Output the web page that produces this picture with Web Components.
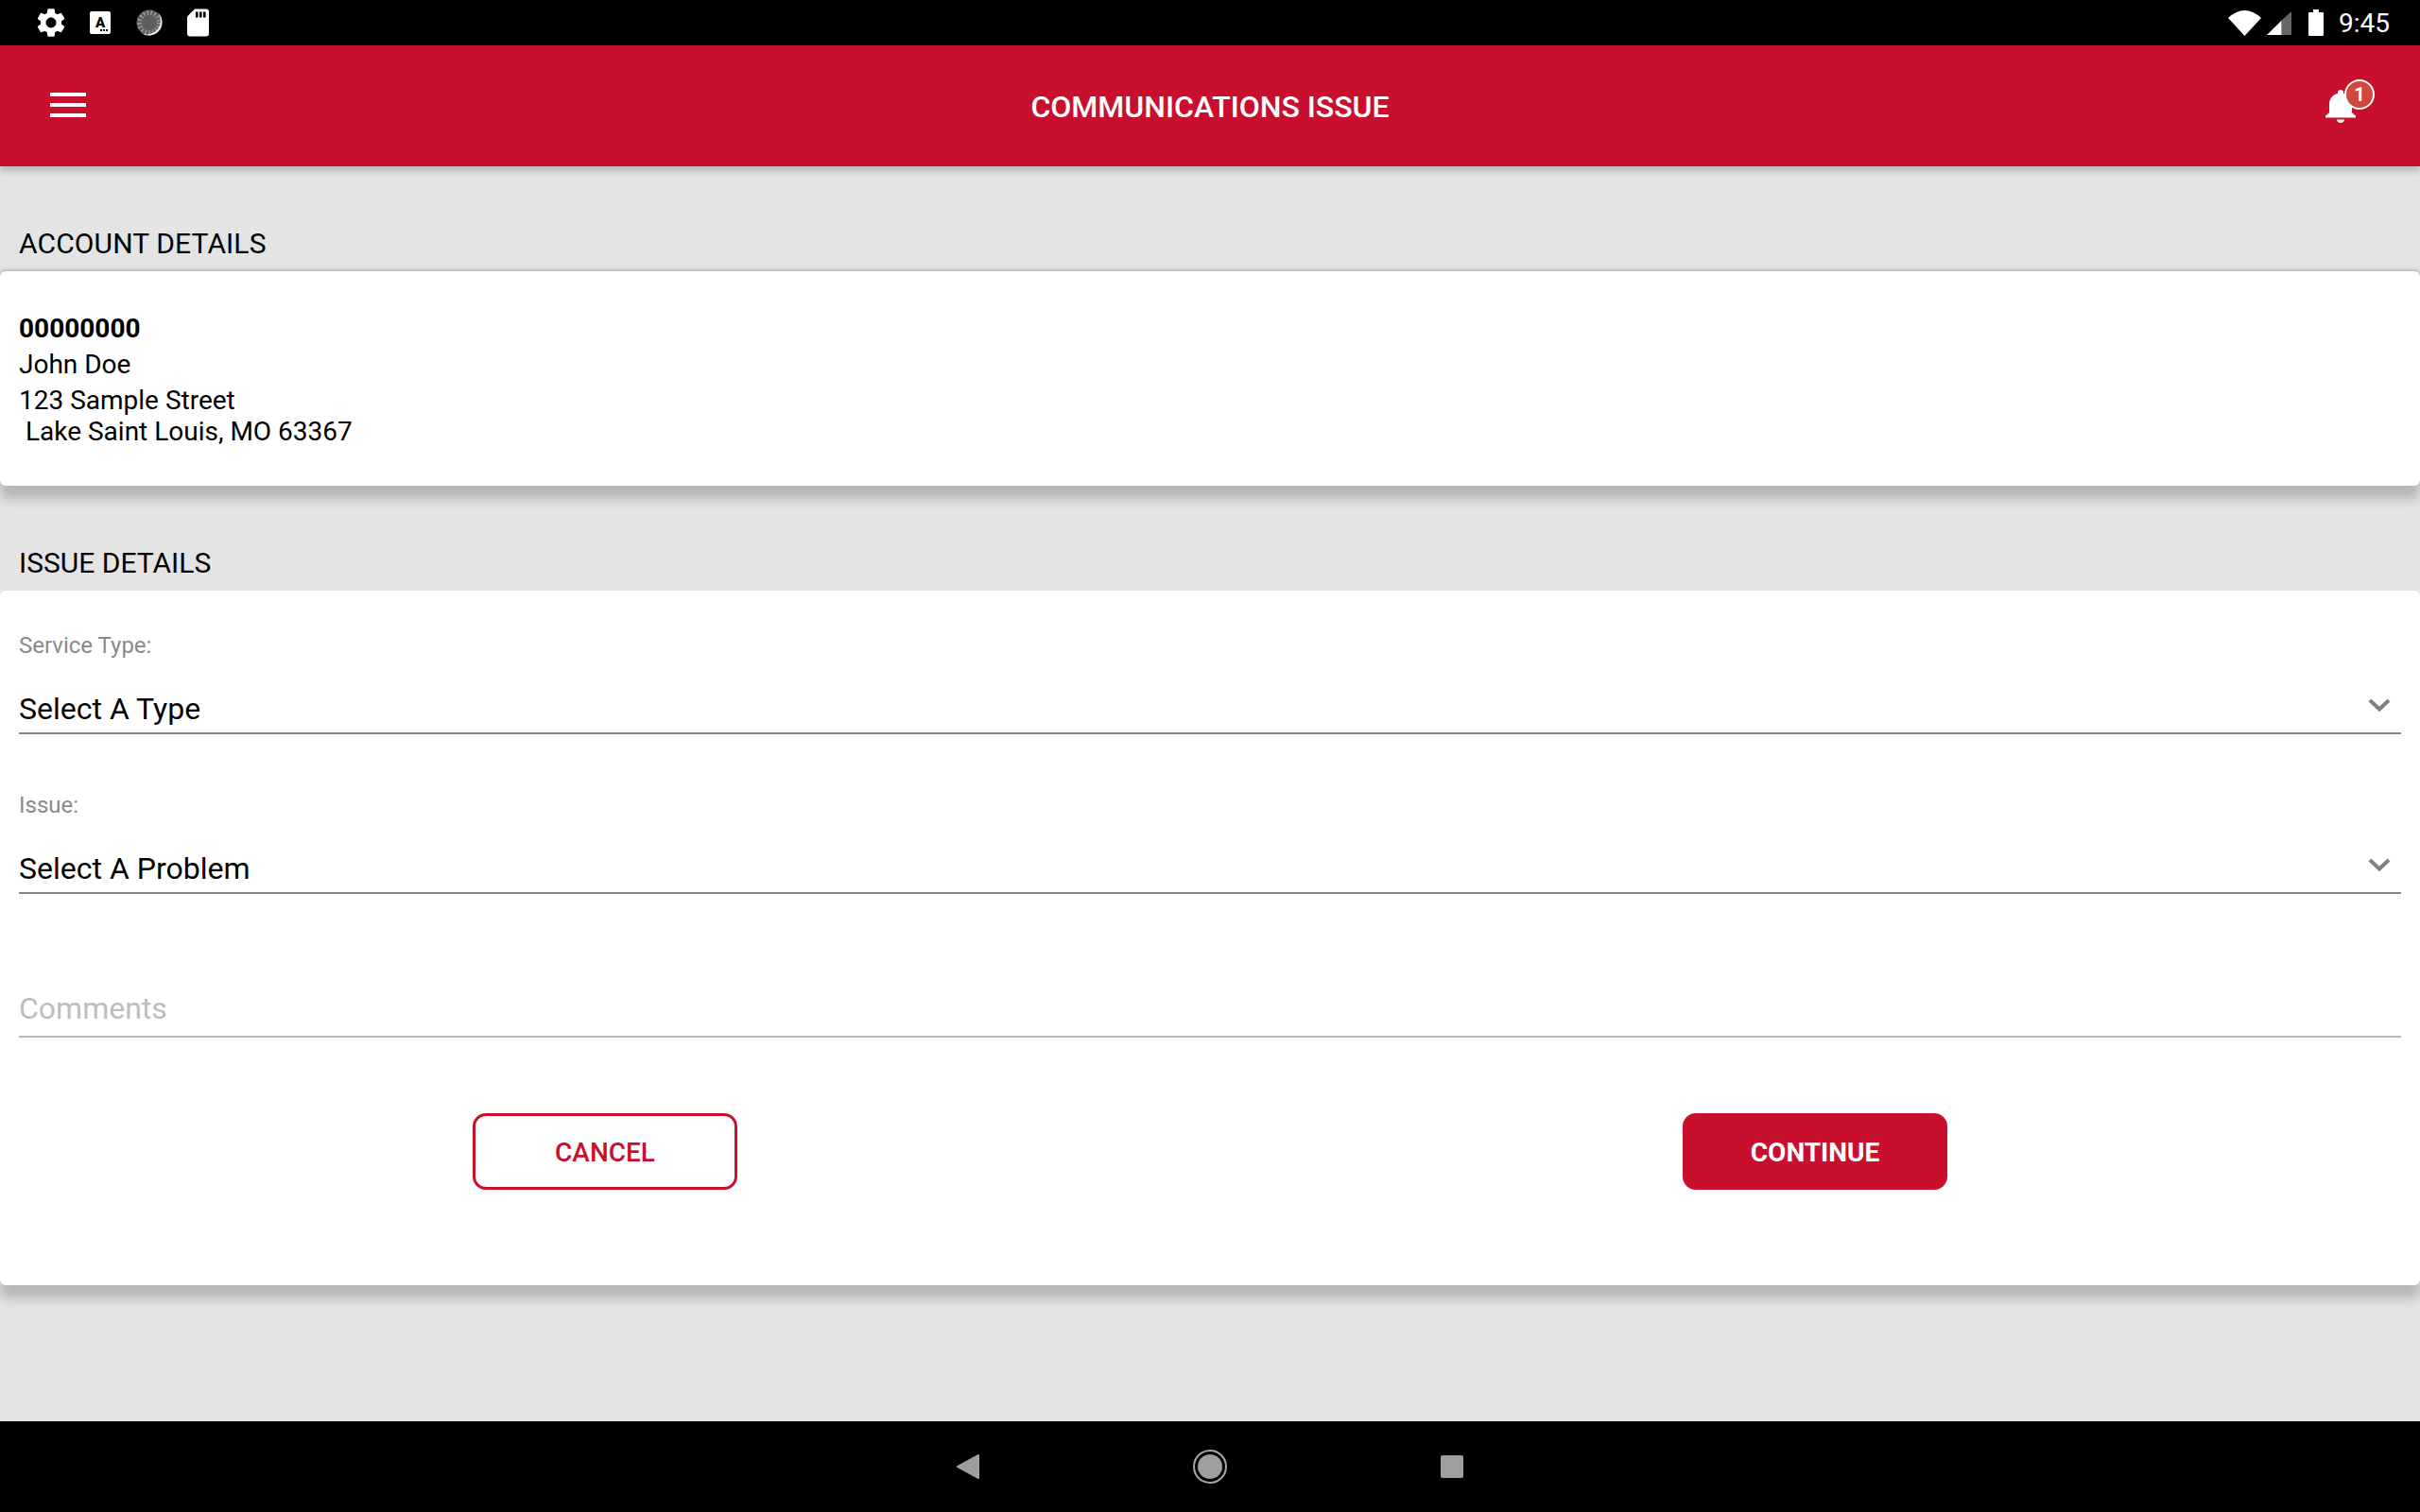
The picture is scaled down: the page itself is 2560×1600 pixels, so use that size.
<!DOCTYPE html>
<html>
<head>
<meta charset="utf-8">
<title>Communications Issue</title>
<style>
  html, body { margin: 0; height: 100%; }
  body {
    width: 2560px;
    height: 1600px;
    overflow: hidden;
    display: flex;
    flex-direction: column;
    background: #e4e4e4;
    color: #000;
    font-family: Roboto, "Liberation Sans", sans-serif;
  }
  main { flex: 1; display: block; }
</style>
</head>
<body>
  <status-bar></status-bar>
  <app-bar>COMMUNICATIONS ISSUE</app-bar>
  <main>
    <section-label style="margin-top:64px;letter-spacing:.12px">ACCOUNT DETAILS</section-label>
    <info-card pad="44px 20px 41px" shade>
      <account-info number="00000000" name="John Doe" street="123 Sample Street" city=" Lake Saint Louis, MO 63367"></account-info>
    </info-card>
    <section-label style="margin-top:64px">ISSUE DETAILS</section-label>
    <info-card pad="44px 20px 101px">
      <select-field label="Service Type:" value="Select A Type"></select-field>
      <select-field label="Issue:" value="Select A Problem" style="margin-top:61px"></select-field>
      <comment-field placeholder="Comments"></comment-field>
      <form-actions>
        <action-button outline>CANCEL</action-button>
        <action-button>CONTINUE</action-button>
      </form-actions>
    </info-card>
  </main>
  <nav-bar></nav-bar>

<script>
class StatusBar extends HTMLElement {
  connectedCallback() {
    const shadow = this.attachShadow({ mode: "open" });
    shadow.innerHTML = `
      <style>
        :host {
          display: flex;
          justify-content: space-between;
          align-items: center;
          height: 48px;
          background: #000;
          color: #fff;
          flex: none;
        }
        .left { display: flex; align-items: center; gap: 20px; margin-left: 38px; }
        .left svg { width: 32px; height: 32px; display: block; }
        .right { display: flex; align-items: center; margin-right: 32px; }
        .time {
          font: 400 28px/33px Roboto, sans-serif;
          margin-left: 16px;
          color: #fff;
        }
        svg { display: block; flex: none; }
      </style>
      <div class="left">
        <svg viewBox="1.5 1.5 21 21"><path fill="#fff" d="M19.14 12.94c.04-.3.06-.61.06-.94 0-.32-.02-.64-.07-.94l2.03-1.58c.18-.14.23-.41.12-.61l-1.92-3.32c-.12-.22-.37-.29-.59-.22l-2.39.96c-.5-.38-1.03-.7-1.62-.94l-.36-2.54c-.04-.24-.24-.41-.48-.41h-3.84c-.24 0-.43.17-.47.41l-.36 2.54c-.59.24-1.13.57-1.62.94l-2.39-.96c-.22-.08-.47 0-.59.22L2.74 8.87c-.12.21-.08.47.12.61l2.03 1.58c-.05.3-.09.63-.09.94s.02.64.07.94l-2.03 1.58c-.18.14-.23.41-.12.61l1.92 3.32c.12.22.37.29.59.22l2.39-.96c.5.38 1.03.7 1.62.94l.36 2.54c.05.24.24.41.48.41h3.84c.24 0 .44-.17.47-.41l.36-2.54c.59-.24 1.13-.56 1.62-.94l2.39.96c.22.08.47 0 .59-.22l1.92-3.32c.12-.22.07-.47-.12-.61l-2.01-1.58zM12 15.6c-1.98 0-3.6-1.62-3.6-3.6s1.62-3.6 3.6-3.6 3.6 1.62 3.6 3.6-1.62 3.6-3.6 3.6z"/></svg>
        <svg viewBox="0 0 32 32">
          <rect x="5" y="4" width="22" height="24" rx="2" fill="#fff"/>
          <text x="16" y="21" text-anchor="middle" font-family="Roboto, sans-serif" font-weight="900" font-size="15" fill="#000">A</text>
          <rect x="16" y="23" width="2" height="2" fill="#000"/><rect x="19" y="23" width="2" height="2" fill="#000"/><rect x="22" y="23" width="2" height="2" fill="#000"/>
        </svg>
        <svg viewBox="0 0 32 32">
          <circle cx="16" cy="16" r="13.5" fill="#5e5e5e"/>
          <circle cx="16" cy="16" r="10.5" fill="none" stroke="#a0a0a0" stroke-width="5" stroke-dasharray="1.3 2.6"/>
          <path d="M25 5.3A14 14 0 0 1 7 26.7 14.3 14.3 0 0 0 25 5.3Z" fill="#eee"/>
        </svg>
        <svg viewBox="0 0 32 32">
          <path fill="#fff" d="M12 1.5H24a3 3 0 0 1 3 3V27.5a3 3 0 0 1-3 3H7a3 3 0 0 1-3-3V9.5Z"/>
          <rect x="13" y="4.5" width="2.6" height="6" fill="#000"/><rect x="17" y="4.5" width="2.6" height="6" fill="#000"/><rect x="21" y="4.5" width="2.6" height="6" fill="#000"/>
        </svg>
      </div>
      <div class="right">
        <svg width="35" height="27" viewBox="0 0 35 27"><path fill="#fff" d="M0 8Q17.5-8 35 8L17.5 27Z"/></svg>
        <svg width="26" height="25" viewBox="0 0 26 25" style="margin-left:6px"><path fill="#fff" d="M0 25L15.7 9.5V25Z"/><path fill="#666" d="M15.7 9.5L26 0V25H15.7Z"/></svg>
        <svg width="16" height="28" viewBox="0 0 16 28" style="margin-left:18px"><path fill="#fff" d="M5 0H11V3H15a1 1 0 0 1 1 1V27a1 1 0 0 1-1 1H1a1 1 0 0 1-1-1V4a1 1 0 0 1 1-1H5Z"/></svg>
        <span class="time">9:45</span>
      </div>
    `;
  }
}

class AppBar extends HTMLElement {
  connectedCallback() {
    const shadow = this.attachShadow({ mode: "open" });
    shadow.innerHTML = `
      <style>
        :host {
          display: grid;
          grid-template-columns: 1fr auto 1fr;
          align-items: center;
          height: 128px;
          background: #c8102e;
          color: #fff;
          box-shadow: 0 6px 6px rgba(0,0,0,.17);
          position: relative;
          flex: none;
        }
        .menu { margin-left: 53px; width: 38px; display: grid; gap: 7px; margin-bottom: 2px; }
        .menu i { display: block; height: 4px; background: #fff; }
        .title { font: 500 32px/38px Roboto, sans-serif; padding-top: 1px; }
        .end { justify-self: end; margin-right: 68px; position: relative; width: 32px; height: 35px; }
        .end svg { display: block; }
        .badge {
          position: absolute;
          left: 20px;
          top: -11px;
          width: 28px;
          height: 28px;
          border: 2px solid #fff;
          border-radius: 50%;
          background: #d1463f;
          color: #fff;
          font: 700 20px/28px Roboto, sans-serif;
          text-align: center;
        }
      </style>
      <div class="menu"><i></i><i></i><i></i></div>
      <div class="title"><slot></slot></div>
      <div class="end">
        <svg width="32" height="35" viewBox="4 2.5 16 19.5" preserveAspectRatio="none"><path fill="#fff" d="M12 22c1.1 0 2-.9 2-2h-4c0 1.1.89 2 2 2zm6-6v-5c0-3.07-1.64-5.64-4.5-6.32V4c0-.83-.67-1.5-1.5-1.5s-1.5.67-1.5 1.5v.68C7.63 5.36 6 7.92 6 11v5l-2 2v1h16v-1l-2-2z"/></svg>
        <span class="badge">1</span>
      </div>
    `;
  }
}

class SectionLabel extends HTMLElement {
  connectedCallback() {
    const shadow = this.attachShadow({ mode: "open" });
    shadow.innerHTML = `
      <style>
        :host {
          display: block;
          padding: 0 20px;
          margin-bottom: 12px;
          font: 400 30px/35px Roboto, sans-serif;
          color: #000;
        }
      </style>
      <slot></slot>
    `;
  }
}

class InfoCard extends HTMLElement {
  connectedCallback() {
    const shadow = this.attachShadow({ mode: "open" });
    const pad = this.getAttribute("pad") || "20px";
    shadow.innerHTML = `
      <style>
        :host {
          display: block;
          background: #fff;
          border-radius: 6px;
          padding: ${pad};
          box-shadow: 0 14px 12px rgba(0,0,0,.2);
        }
        :host([shade]) {
          box-shadow: 0 14px 12px rgba(0,0,0,.2), 0 -2px 3px rgba(0,0,0,.18);
        }
      </style>
      <slot></slot>
    `;
  }
}

class AccountInfo extends HTMLElement {
  connectedCallback() {
    const shadow = this.attachShadow({ mode: "open" });
    shadow.innerHTML = `
      <style>
        :host { display: block; font: 400 28px/33px Roboto, sans-serif; color: #000; }
        .num { font-weight: 700; }
        .name, .addr { margin-top: 5px; }
        .addr span { display: block; white-space: pre; }
      </style>
      <div class="num">${this.getAttribute("number")}</div>
      <div class="name">${this.getAttribute("name")}</div>
      <div class="addr"><span>${this.getAttribute("street")}</span><span>${this.getAttribute("city")}</span></div>
    `;
  }
}

class SelectField extends HTMLElement {
  connectedCallback() {
    const shadow = this.attachShadow({ mode: "open" });
    shadow.innerHTML = `
      <style>
        :host { display: block; }
        .label { font: 400 24px/28px Roboto, sans-serif; color: #8a8a8a; }
        .row {
          margin-top: 34px;
          padding-bottom: 6px;
          border-bottom: 2px solid #858585;
          display: flex;
          justify-content: space-between;
          align-items: flex-start;
          font: 400 32px/38px Roboto, sans-serif;
          color: #000;
        }
        svg { display: block; margin: 7px 11px 0 0; }
      </style>
      <div class="label">${this.getAttribute("label")}</div>
      <div class="row">
        <span>${this.getAttribute("value")}</span>
        <svg width="24" height="16" viewBox="0 0 24 16"><path d="M2 3L12 12.5 22 3" fill="none" stroke="#808080" stroke-width="4"/></svg>
      </div>
    `;
  }
}

class CommentField extends HTMLElement {
  connectedCallback() {
    const shadow = this.attachShadow({ mode: "open" });
    shadow.innerHTML = `
      <style>
        :host {
          display: block;
          margin-top: 102px;
          padding-bottom: 10px;
          border-bottom: 2px solid #b8b8b8;
          font: 400 32px/38px Roboto, sans-serif;
          color: #bdbdbd;
        }
      </style>
      ${this.getAttribute("placeholder")}
    `;
  }
}

class FormActions extends HTMLElement {
  connectedCallback() {
    const shadow = this.attachShadow({ mode: "open" });
    shadow.innerHTML = `
      <style>
        :host {
          display: grid;
          grid-template-columns: 1fr 1fr;
          justify-items: center;
          margin: 80px -20px 0;
        }
      </style>
      <slot></slot>
    `;
  }
}

class ActionButton extends HTMLElement {
  connectedCallback() {
    const shadow = this.attachShadow({ mode: "open" });
    shadow.innerHTML = `
      <style>
        :host {
          display: flex;
          align-items: center;
          justify-content: center;
          box-sizing: border-box;
          width: 280px;
          height: 81px;
          padding-top: 2px;
          border-radius: 14px;
          background: #c8102e;
          color: #fff;
          font: 700 28px/33px Roboto, sans-serif;
        }
        :host([outline]) {
          background: #fff;
          color: #c8102e;
          border: 3px solid #c8102e;
          font-weight: 500;
        }
      </style>
      <slot></slot>
    `;
  }
}

class NavBar extends HTMLElement {
  connectedCallback() {
    const shadow = this.attachShadow({ mode: "open" });
    shadow.innerHTML = `
      <style>
        :host {
          display: flex;
          justify-content: center;
          align-items: center;
          gap: 208px;
          height: 96px;
          background: #000;
          flex: none;
        }
        svg { display: block; }
      </style>
      <svg width="48" height="48" viewBox="0 0 48 48"><path fill="#9e9e9e" stroke="#9e9e9e" stroke-width="2" stroke-linejoin="round" d="M13 24L35 12V36Z"/></svg>
      <svg width="48" height="48" viewBox="0 0 48 48"><circle cx="24" cy="24" r="17" fill="none" stroke="#a8a8a8" stroke-width="2"/><circle cx="24" cy="24" r="13" fill="#9e9e9e"/></svg>
      <svg width="48" height="48" viewBox="0 0 48 48"><rect x="12" y="12" width="24" height="24" rx="2" fill="#9e9e9e"/></svg>
    `;
  }
}

customElements.define("status-bar", StatusBar);
customElements.define("app-bar", AppBar);
customElements.define("section-label", SectionLabel);
customElements.define("info-card", InfoCard);
customElements.define("account-info", AccountInfo);
customElements.define("select-field", SelectField);
customElements.define("comment-field", CommentField);
customElements.define("form-actions", FormActions);
customElements.define("action-button", ActionButton);
customElements.define("nav-bar", NavBar);
</script>
</body>
</html>
